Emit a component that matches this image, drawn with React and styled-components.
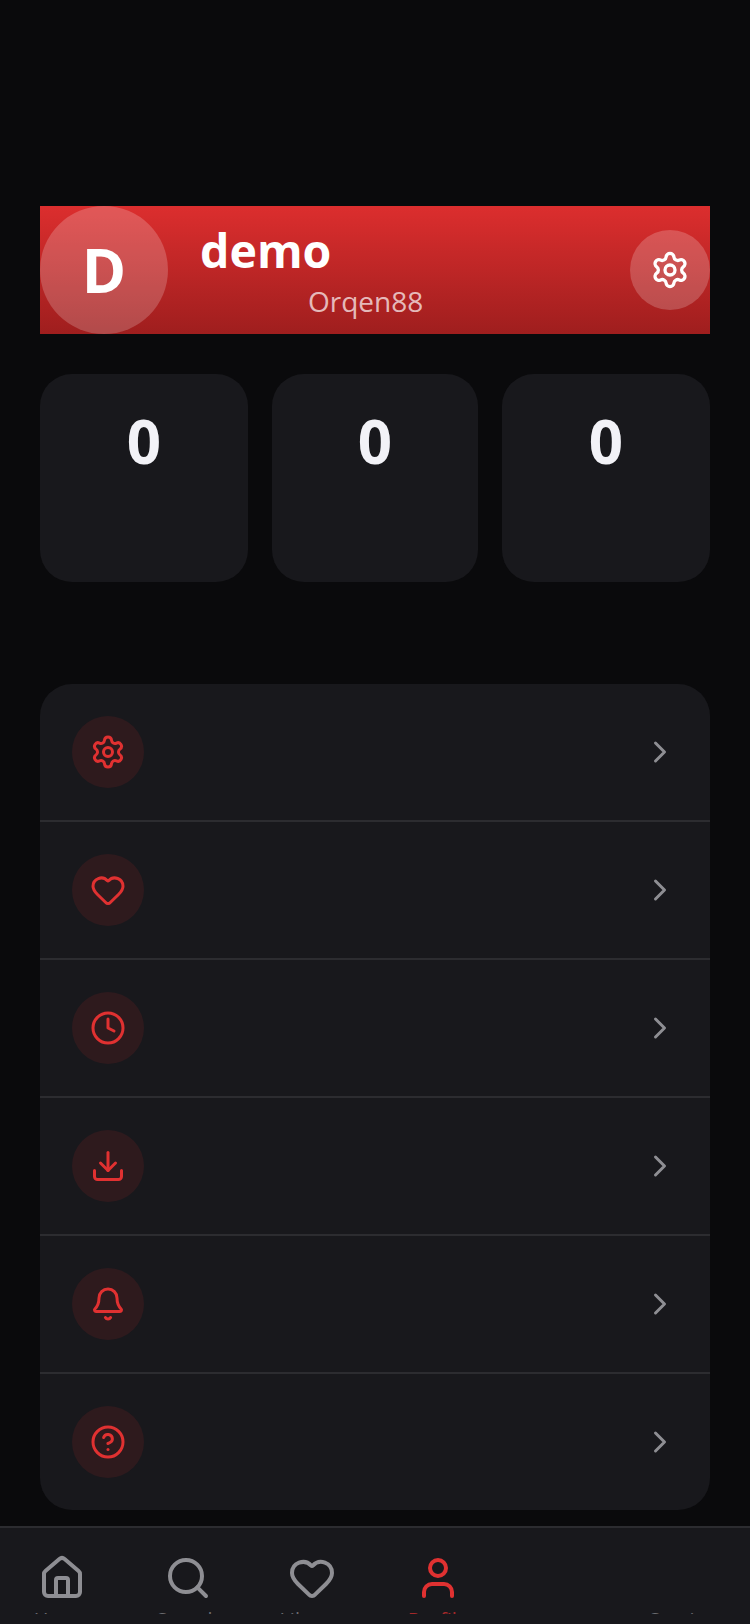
import React from 'react'
import styled, { createGlobalStyle } from 'styled-components'
import {
  Bell,
  ChevronRight,
  CircleHelp,
  Clock,
  Download,
  Heart,
  House,
  Search,
  Settings,
  User,
} from 'lucide-react'

const GlobalStyle = createGlobalStyle`
  html, body {
    margin: 0;
    background: #0a0a0c;
    font-family: 'Open Sans', 'Noto Sans', sans-serif;
  }
`

const Page = styled.div`
  display: flex;
  flex-direction: column;
  width: 750px;
  height: 1624px;
  overflow: hidden;
  background: #0a0a0c;
`

const Content = styled.main`
  flex: 1;
  display: flex;
  flex-direction: column;
  padding: 206px 40px 0;
`

const Banner = styled.section`
  display: flex;
  align-items: center;
  gap: 32px;
  height: 128px;
  background: linear-gradient(180deg, #dc2e2e 0%, #9f1e1e 100%);
  color: #fff;
`

const Avatar = styled.div`
  flex: none;
  display: flex;
  align-items: center;
  justify-content: center;
  width: 128px;
  height: 128px;
  border-radius: 50%;
  background: rgba(255, 255, 255, 0.2);
  font-size: 60px;
  font-weight: 700;
`

const Names = styled.div`
  flex: 1;
  display: flex;
  flex-direction: column;
  padding-top: 5px;
`

const Name = styled.h1`
  margin: 0;
  font-size: 46.5px;
  font-weight: 700;
  line-height: 52px;
`

const Handle = styled.div`
  margin: 5px 0 0 108px;
  font-size: 28px;
  line-height: 40px;
  color: rgba(255, 255, 255, 0.7);
`

const GearButton = styled.button`
  flex: none;
  display: flex;
  align-items: center;
  justify-content: center;
  width: 80px;
  height: 80px;
  padding: 0;
  border: 0;
  border-radius: 50%;
  background: rgba(255, 255, 255, 0.2);
  color: #fff;
`

const Stats = styled.section`
  display: grid;
  grid-template-columns: 208px 206px 208px;
  gap: 24px;
  margin-top: 40px;
`

const StatCard = styled.div`
  height: 208px;
  padding-top: 26px;
  box-sizing: border-box;
  border-radius: 32px;
  background: #18181c;
  color: #f2f2f7;
  font-size: 60px;
  font-weight: 700;
  text-align: center;
`

const Menu = styled.section`
  margin-top: 102px;
  border-radius: 32px;
  background: #18181c;
  overflow: hidden;
`

const MenuRow = styled.div`
  display: flex;
  align-items: center;
  justify-content: space-between;
  padding: 32px;
  border-bottom: 2px solid #2c2c30;

  &:last-child {
    border-bottom: 0;
  }
`

const IconCircle = styled.div`
  display: flex;
  align-items: center;
  justify-content: center;
  width: 72px;
  height: 72px;
  border-radius: 50%;
  background: rgba(224, 49, 49, 0.11);
  color: #e03131;
`

const Chevron = styled(ChevronRight)`
  color: #8e8e93;
`

const TabBar = styled.nav`
  flex: none;
  display: grid;
  grid-template-columns: 124px 128px 120px 132px 120px 126px;
  box-sizing: border-box;
  height: 98px;
  padding-top: 26px;
  border-top: 2px solid #2c2c30;
  background: #18181c;
`

const Tab = styled.div`
  display: flex;
  flex-direction: column;
  align-items: center;
  color: ${(p) => (p.$active ? '#e03131' : '#8e8e93')};
`

const TabIconSlot = styled.div`
  height: 48px;
`

const TabLabelClip = styled.div`
  height: 8px;
  margin-top: 4px;
  overflow: hidden;
  font-size: 20px;
  white-space: nowrap;
  opacity: 0.7;
`

const menuIcons = [Settings, Heart, Clock, Download, Bell, CircleHelp]

const tabs = [
  { label: 'Home', icon: House },
  { label: 'Search', icon: Search },
  { label: 'Library', icon: Heart },
  { label: 'Profile', icon: User, active: true },
  {},
  { label: 'Services' },
]

const App = () => {
  return (
    <Page>
      <GlobalStyle />
      <Content>
        <Banner>
          <Avatar>D</Avatar>
          <Names>
            <Name>demo</Name>
            <Handle>Orqen88</Handle>
          </Names>
          <GearButton aria-label="Settings">
            <Settings size={40} />
          </GearButton>
        </Banner>

        <Stats>
          <StatCard>0</StatCard>
          <StatCard>0</StatCard>
          <StatCard>0</StatCard>
        </Stats>

        <Menu>
          {menuIcons.map((Icon, i) => (
            <MenuRow key={i}>
              <IconCircle>
                <Icon size={36} />
              </IconCircle>
              <Chevron size={36} />
            </MenuRow>
          ))}
        </Menu>
      </Content>

      <TabBar>
        {tabs.map((tab, i) => (
          <Tab key={i} $active={tab.active}>
            <TabIconSlot>{tab.icon && <tab.icon size={48} />}</TabIconSlot>
            {tab.label && <TabLabelClip>{tab.label}</TabLabelClip>}
          </Tab>
        ))}
      </TabBar>
    </Page>
  )
}

export default App
